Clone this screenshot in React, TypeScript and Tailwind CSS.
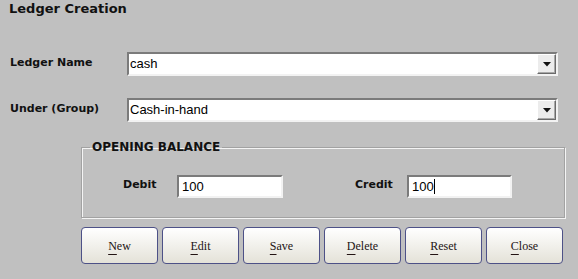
import React from "react";

const sunken =
  "border-2 border-t-[#7b7b7b] border-l-[#7b7b7b] border-b-[#f2f2f2] border-r-[#f2f2f2] bg-white";

function Combo({ value }: { value: string }) {
  return (
    <div className={`${sunken} w-[431px] h-[24px] flex items-center`}>
      <span className="flex-1 pl-[1px] text-[13px] leading-[16px] text-black font-['Liberation_Sans',Arial,sans-serif]">
        {value}
      </span>
      <div className="w-[19px] h-[20px] mr-[0px] flex items-center justify-center bg-[#ececec] border border-t-white border-l-white border-r-[#6a6a6a] border-b-[#6a6a6a] shadow-[inset_-1px_-1px_0_#a8a8a8]">
        <svg width="8" height="5" viewBox="0 0 8 5">
          <path d="M0 0 H8 L4 4.5 Z" fill="#111" />
        </svg>
      </div>
    </div>
  );
}

function Btn({ label }: { label: string }) {
  return (
    <button
      type="button"
      className="w-[77px] h-[37px] rounded-[4px] border-[1.5px] border-[#4d5187] bg-gradient-to-b from-white to-[#e4e2d8] text-[12px] leading-[14px] text-[#231414] font-['Liberation_Serif','Times_New_Roman',serif] flex items-center justify-center"
    >
      <span>
        <span className="underline underline-offset-[4px] decoration-[1px]">{label[0]}</span>
        {label.slice(1)}
      </span>
    </button>
  );
}

export default function App() {
  const labelCls =
    "text-[11px] leading-[13px] font-bold text-[#111] font-['DejaVu_Sans',Tahoma,sans-serif]";
  return (
    <div className="w-[578px] h-[279px] bg-[#c0c0c0] overflow-hidden">
      <h1 className="pl-[9px] pt-[1px] text-[13px] leading-[16px] font-bold text-[#111] font-['DejaVu_Sans',Tahoma,sans-serif]">
        Ledger Creation
      </h1>

      <div className="mt-[35px] flex items-center">
        <label className={`${labelCls} w-[127px] pl-[10px] -mt-[4px]`}>Ledger Name</label>
        <Combo value="cash" />
      </div>

      <div className="mt-[22px] flex items-center">
        <label className={`${labelCls} w-[127px] pl-[10px] -mt-[4px]`}>Under (Group)</label>
        <Combo value="Cash-in-hand" />
      </div>

      <fieldset className="mt-[18px] ml-[81px] w-[484px] border border-[#a2a2a2] shadow-[inset_1px_1px_0_#f4f4f4,1px_1px_0_#f4f4f4]">
        <legend className="ml-[8px] px-[2px] text-[12px] leading-[14px] font-bold text-[#111] font-['DejaVu_Sans',Tahoma,sans-serif]">
          OPENING BALANCE
        </legend>
        <div className="pt-[21px] pb-[19px] pl-[41px] flex items-start">
          <span className={`${labelCls} w-[54px] mt-[3px]`}>Debit</span>
          <div className={`${sunken} w-[106px] h-[23px] flex items-center pl-[3px] text-[13px] leading-[16px] text-black font-['Liberation_Sans',Arial,sans-serif]`}>
            100
          </div>
          <span className={`${labelCls} ml-[72px] w-[52px] mt-[3px]`}>Credit</span>
          <div className={`${sunken} w-[105px] h-[23px] flex items-center pl-[3px] text-[13px] leading-[16px] text-black font-['Liberation_Sans',Arial,sans-serif]`}>
            100
            <span className="inline-block w-[1px] h-[15px] bg-black" />
          </div>
        </div>
      </fieldset>

      <div className="mt-[9px] ml-[81px] flex gap-[4px]">
        {["New", "Edit", "Save", "Delete", "Reset", "Close"].map((l) => (
          <Btn key={l} label={l} />
        ))}
      </div>
    </div>
  );
}
